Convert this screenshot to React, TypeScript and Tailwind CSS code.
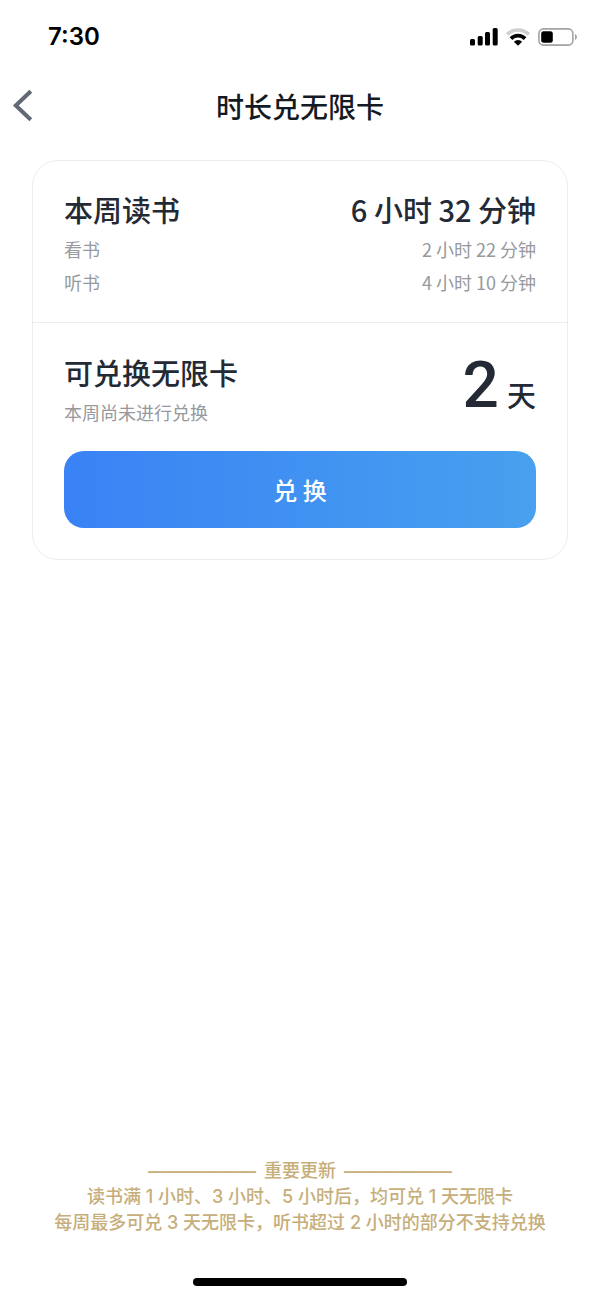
type Reading = {
  label: string;
  value: string;
};

const readings: Reading[] = [
  { label: "看书", value: "2 小时 22 分钟" },
  { label: "听书", value: "4 小时 10 分钟" },
];

const StatusBar = () => {
  return (
    <div className="flex h-[74px] items-center justify-between pl-12 pr-[22px]">
      <span className="font-['Inter',sans-serif] text-2xl font-semibold text-black">
        7:30
      </span>
      <div className="flex items-center gap-2">
        <svg width="28" height="18" viewBox="0 0 28 18" aria-hidden="true">
          <rect x="0" y="11" width="5" height="6.5" rx="1.5" />
          <rect x="7.7" y="8" width="5" height="9.5" rx="1.5" />
          <rect x="15" y="4" width="5" height="13.5" rx="1.5" />
          <rect x="22.7" y="0" width="5" height="17.5" rx="1.5" />
        </svg>
        <svg width="24" height="18" viewBox="0 0 24 18" aria-hidden="true">
          <path
            d="M1.2 6.4a15.6 15.6 0 0 1 21.6 0"
            fill="none"
            stroke="#cfcfcf"
            strokeWidth="3.6"
          />
          <path
            d="M5 10.6a9.8 9.8 0 0 1 14 0"
            fill="none"
            stroke="#000"
            strokeWidth="3.8"
          />
          <path d="M12 17.8l-4.1-4a5.8 5.8 0 0 1 8.2 0z" />
        </svg>
        <svg width="40" height="18" viewBox="0 0 40 18" aria-hidden="true">
          <rect
            x="0.9"
            y="0.9"
            width="34"
            height="16.2"
            rx="4.6"
            fill="none"
            stroke="#a3a3a3"
            strokeWidth="1.6"
          />
          <rect x="3.2" y="3.2" width="11.6" height="11.6" rx="2.4" />
          <path d="M37 6c2.6 1 2.6 5 0 6z" fill="#a3a3a3" />
        </svg>
      </div>
    </div>
  );
};

const Header = () => {
  return (
    <header className="grid h-16 grid-cols-[1fr_auto_1fr] items-center">
      <button type="button" aria-label="返回" className="justify-self-start pl-3">
        <svg
          width="22"
          height="34"
          viewBox="0 0 22 34"
          fill="none"
          stroke="#626975"
          strokeWidth="4"
        >
          <path d="M18.8 2.2L3.8 16.5l15 14.3" />
        </svg>
      </button>
      <h1 className="text-[28px] font-medium text-[#141a24]">时长兑无限卡</h1>
    </header>
  );
};

const App = () => {
  return (
    <main className="flex min-h-screen flex-col bg-white font-['Noto_Sans_CJK_SC',sans-serif] text-[#232a35]">
      <StatusBar />
      <Header />

      <div className="mx-8 mt-[22px] rounded-[26px] border border-[#ececec]">
        {/* Weekly reading time */}
        <section className="px-[31px] pb-6 pt-[27px]">
          <div className="flex h-11 items-center justify-between text-[29px] font-medium">
            <h2>本周读书</h2>
            <p>6 小时 32 分钟</p>
          </div>
          <dl className="text-lg text-[#96999d]">
            {readings.map((r) => (
              <div
                key={r.label}
                className="flex h-[33px] items-center justify-between"
              >
                <dt>{r.label}</dt>
                <dd>{r.value}</dd>
              </div>
            ))}
          </dl>
        </section>

        {/* Redeem */}
        <section className="border-t border-[#ececec] px-[31px] pb-[31px] pt-[27px]">
          <div className="flex items-center justify-between">
            <div>
              <h2 className="flex h-11 items-center text-[29px] font-medium">
                可兑换无限卡
              </h2>
              <p className="flex h-[33px] items-center text-lg text-[#96999d]">
                本周尚未进行兑换
              </p>
            </div>
            <p className="flex items-baseline gap-2 pt-1 font-['Roboto','Noto_Sans_CJK_SC',sans-serif] font-medium">
              <span className="text-[64px] leading-[64px]">2</span>
              <span className="text-[29px] leading-[64px]">天</span>
            </p>
          </div>
          <button
            type="button"
            className="mt-[22px] h-[77px] w-full rounded-[20px] bg-linear-to-r from-[#3a82f5] to-[#48a0ee] text-2xl font-medium text-white"
          >
            兑 换
          </button>
        </section>
      </div>

      <footer className="mt-auto flex flex-col items-center pb-[13px]">
        <div className="text-center font-['Inter','Noto_Sans_CJK_SC',sans-serif] text-lg leading-[26px] font-medium text-[#c6ae7b]">
          <p className="flex justify-center gap-2">
            <span className="font-['Liberation_Sans',sans-serif] font-bold">
              ——————
            </span>
            <span>重要更新</span>
            <span className="font-['Liberation_Sans',sans-serif] font-bold">
              ——————
            </span>
          </p>
          <p>读书满 1 小时、3 小时、5 小时后，均可兑 1 天无限卡</p>
          <p>每周最多可兑 3 天无限卡，听书超过 2 小时的部分不支持兑换</p>
        </div>
        <div className="mt-[42px] h-2 w-[214px] rounded-full bg-black" />
      </footer>
    </main>
  );
};

export default App;
